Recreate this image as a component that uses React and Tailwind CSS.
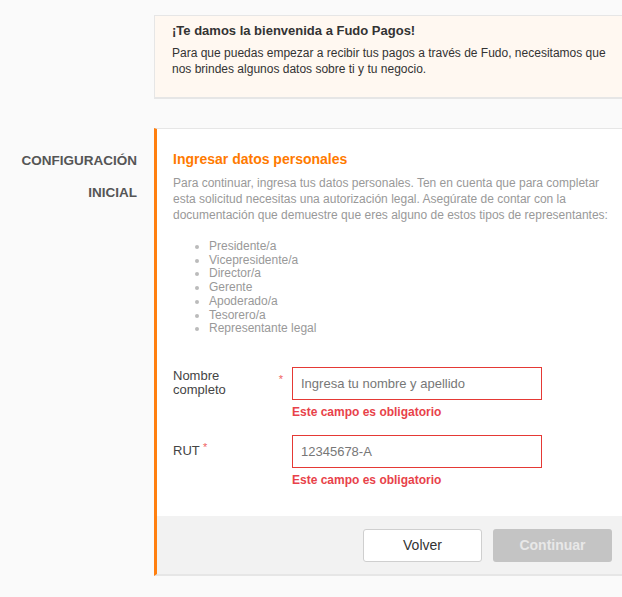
import React from "react";

const roles = [
    "Presidente/a",
    "Vicepresidente/a",
    "Director/a",
    "Gerente",
    "Apoderado/a",
    "Tesorero/a",
    "Representante legal",
];

const FieldRow = ({ label, inlineStar, placeholder, labelWidth }) => {
    return (
        <div>
            <div className="flex items-center">
                <div className="w-[119px] shrink-0 flex items-center text-[13px] leading-[14px] text-[#444]">
                    {inlineStar ? (
                        <span>
                            {label} <span className="relative -top-[4px] text-[11px] text-[#f06262]">*</span>
                        </span>
                    ) : (
                        <>
                            <span className={labelWidth}>{label}</span>
                            <span className="ml-auto mr-[9px] relative -top-[4px] text-[11px] text-[#f06262]">*</span>
                        </>
                    )}
                </div>
                <input
                    className="w-[250px] h-[33px] border border-[#e53935] bg-white px-[8px] text-[13px] text-[#333] placeholder:text-[#777] outline-none"
                    placeholder={placeholder}
                />
            </div>
            <p className="ml-[119px] mt-[4px] text-[12px] leading-[16px] font-bold text-[#e8424a]">
                Este campo es obligatorio
            </p>
        </div>
    );
};

const App = () => {
    return (
        <div
            className="w-[622px] h-[597px] overflow-hidden bg-[#fafafa] flex"
            style={{ fontFamily: '"Liberation Sans", Arial, sans-serif' }}
        >
            {/* left title column */}
            <div className="w-[154px] shrink-0 pt-[145px] pr-[17px] text-right text-[13.5px] leading-[32px] font-bold text-[#555]">
                <div>CONFIGURACIÓN</div>
                <div>INICIAL</div>
            </div>

            <div className="w-[480px] shrink-0 pt-[15px]">
                {/* welcome */}
                <div className="h-[84px] border border-[#e6e6e6] border-b-2 bg-[#fff8f1] pl-[17px] pr-[16px] pt-[5px]">
                    <h2 className="text-[13px] leading-[20px] font-bold text-[#333]">
                        ¡Te damos la bienvenida a Fudo Pagos!
                    </h2>
                    <p className="mt-[4px] text-[12px] leading-[16px] text-[#333]">
                        Para que puedas empezar a recibir tus pagos a través de Fudo, necesitamos que nos brindes algunos datos sobre ti y tu negocio.
                    </p>
                </div>

                {/* card */}
                <div className="mt-[29px] bg-white border border-[#e6e6e6] border-b-2 border-l-[3px] border-l-[#ff7f0f]">
                    <div className="pl-[16px] pr-[14px] pt-[20px] pb-[28px]">
                        <h3 className="text-[14px] leading-[20px] font-bold text-[#ff7a00]">
                            Ingresar datos personales
                        </h3>
                        <p className="mt-[6px] text-[12px] leading-[16px] text-[#999]">
                            Para continuar, ingresa tus datos personales. Ten en cuenta que para completar esta solicitud necesitas una autorización legal. Asegúrate de contar con la documentación que demuestre que eres alguno de estos tipos de representantes:
                        </p>
                        <ul className="mt-[17px] list-disc pl-[36px] text-[12px] leading-[13.7px] text-[#999] marker:text-[#bbb]">
                            {roles.map(role => (
                                <li key={role}>{role}</li>
                            ))}
                        </ul>

                        <div className="mt-[31px] flex flex-col gap-[15px]">
                            <FieldRow label="Nombre completo" labelWidth="w-[80px]" placeholder="Ingresa tu nombre y apellido" />
                            <FieldRow label="RUT" inlineStar placeholder="12345678-A" />
                        </div>
                    </div>

                    {/* footer */}
                    <div className="h-[58px] bg-[#f2f2f2] flex items-start justify-end gap-[11px] pt-[13px] pr-[21px]">
                        <button className="w-[119px] h-[33px] rounded-[3px] border border-[#cfcfcf] bg-white text-[14px] text-[#333]">
                            Volver
                        </button>
                        <button className="w-[119px] h-[33px] rounded-[3px] bg-[#c4c4c4] text-[14px] font-bold text-[#e8e8e8]">
                            Continuar
                        </button>
                    </div>
                </div>
            </div>
        </div>
    );
};

export default App;
